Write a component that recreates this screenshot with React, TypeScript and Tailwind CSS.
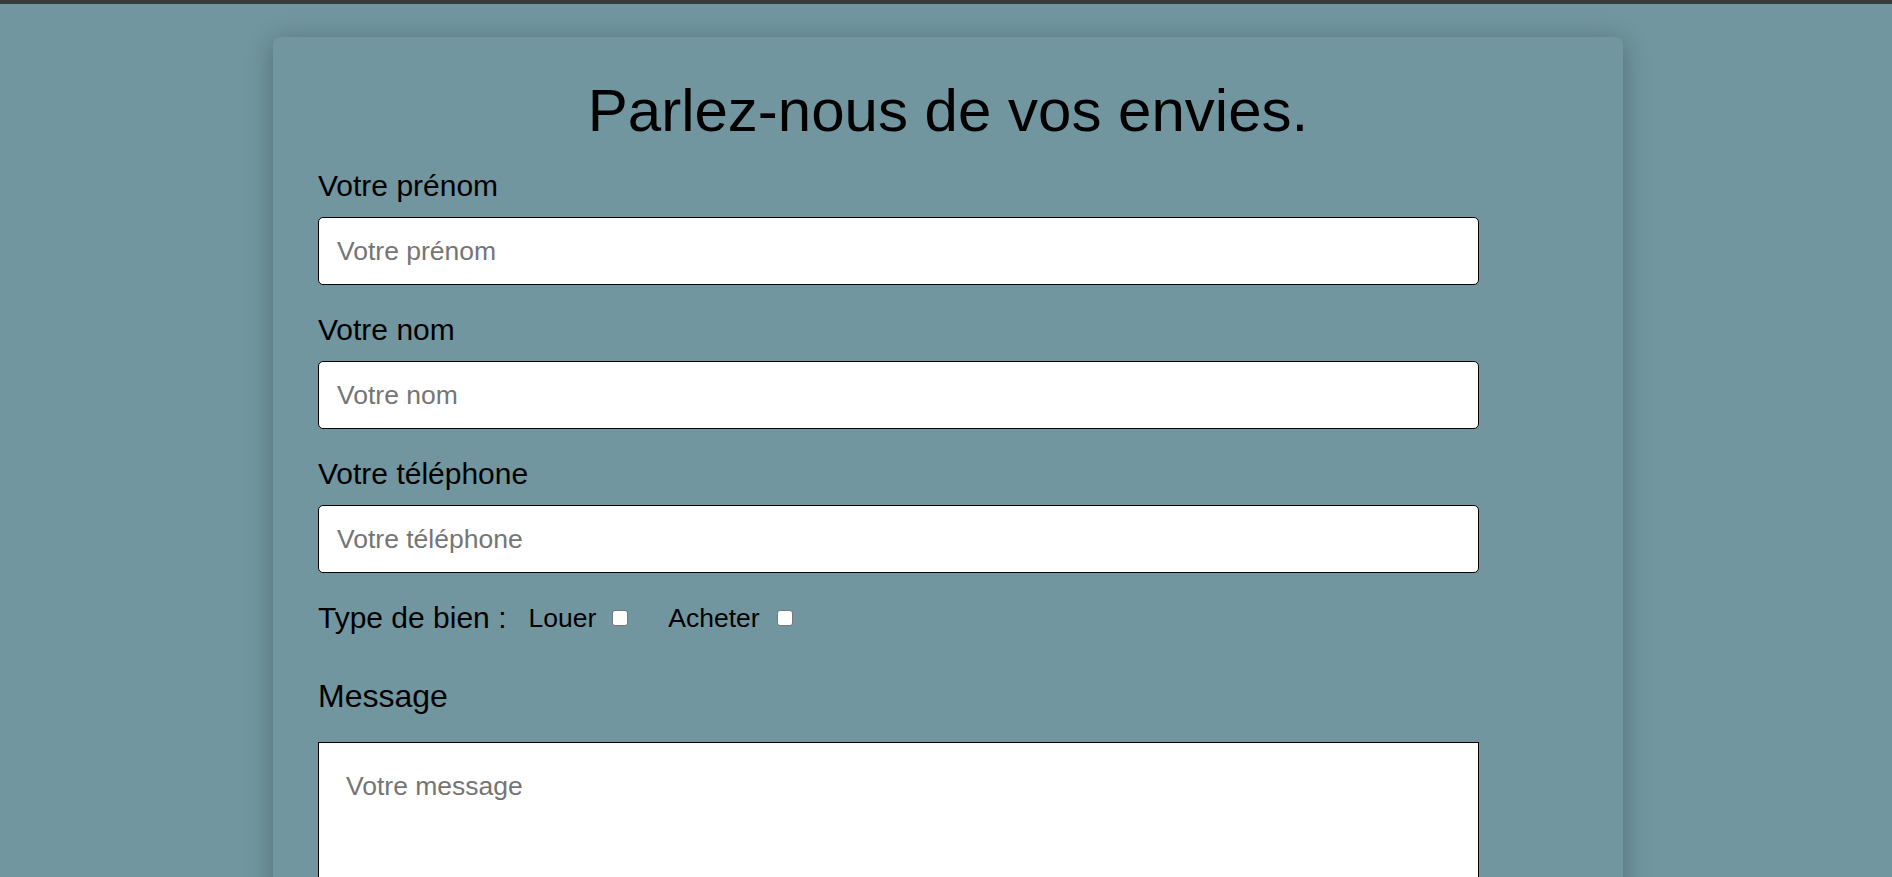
import React from 'react';

const fields = [
  { id: 'prenom', label: 'Votre prénom' },
  { id: 'nom', label: 'Votre nom' },
  { id: 'telephone', label: 'Votre téléphone' },
];

const box =
  'm-0 h-[16px] w-[16px] appearance-none rounded-[3px] border border-[#767676] bg-white checked:bg-[#0075ff]';

export default function App() {
  return (
    <div className="min-h-screen bg-[#71969f] font-['Liberation_Sans',Arial,sans-serif] text-black">
      <div className="h-[4px] bg-[#3b3b3b]" />
      <div className="flex justify-center pl-[4px] pt-[33px] pb-10">
        <form className="w-[1350px] rounded-lg bg-[#71969f] px-[45px] pt-[40px] pb-[40px] shadow-[0_4px_26px_rgba(0,0,0,0.28)]">
          <h1 className="mb-[25px] text-center text-[60px] font-normal leading-[67px]">
            Parlez-nous de vos envies.
          </h1>

          {fields.map((f) => (
            <div key={f.id}>
              <label htmlFor={f.id} className="mb-[14px] block text-[30px] leading-[34px]">
                {f.label}
              </label>
              <input
                id={f.id}
                type="text"
                placeholder={f.label}
                className="mb-[28px] block h-[68px] w-[1161px] rounded-[5px] border border-black bg-white px-[18px] text-[26.5px] outline-none placeholder:text-[#757575]"
              />
            </div>
          ))}

          <div className="mb-[43px] flex items-center leading-[34px]">
            <span className="text-[30px]">Type de bien :</span>
            <label htmlFor="louer" className="ml-[22px] text-[26.5px]">Louer</label>
            <input id="louer" type="checkbox" className={`${box} ml-[16px]`} />
            <label htmlFor="acheter" className="ml-[40px] text-[26.5px]">Acheter</label>
            <input id="acheter" type="checkbox" className={`${box} ml-[17px]`} />
          </div>

          <label htmlFor="message" className="mb-[28px] block text-[32px] leading-[36px]">
            Message
          </label>
          <textarea
            id="message"
            placeholder="Votre message"
            className="block h-[300px] w-[1161px] border border-black bg-white px-[27px] pt-[24px] pb-[27px] text-[26.5px] outline-none placeholder:text-[#757575]"
          />
        </form>
      </div>
    </div>
  );
}
